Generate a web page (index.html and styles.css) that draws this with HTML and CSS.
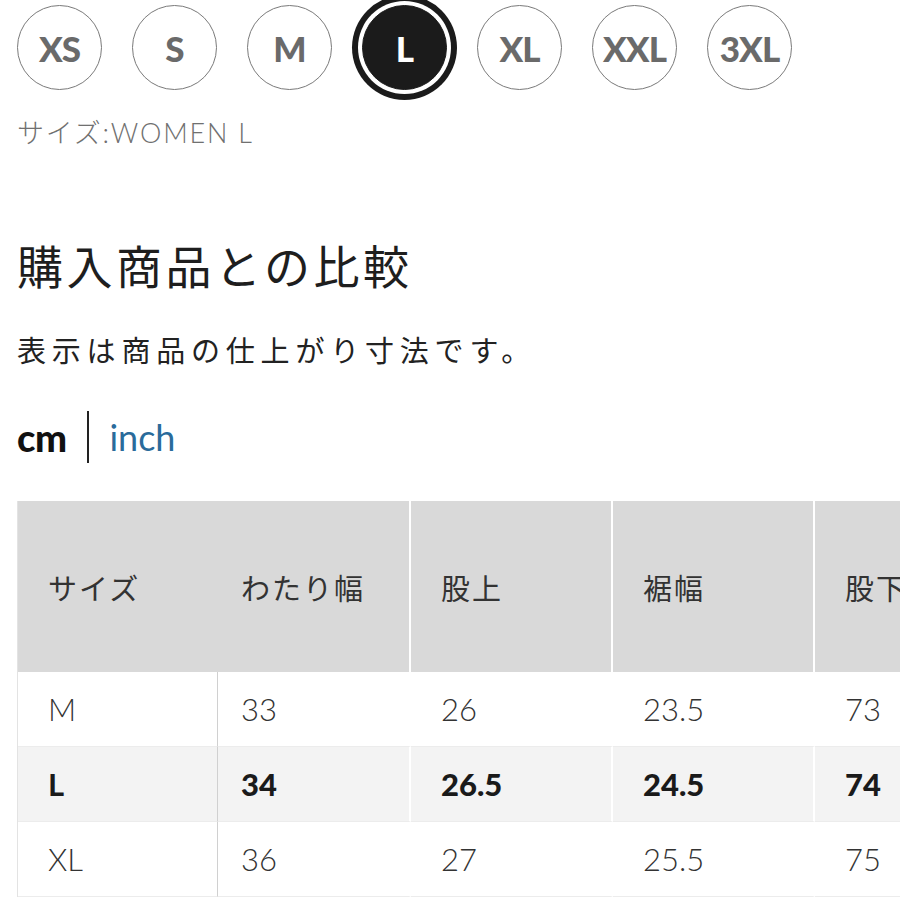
FILE: index.html
```html
<!DOCTYPE html>
<html lang="ja">
<head>
<meta charset="utf-8">
<link rel="stylesheet" href="styles.css">
</head>
<body>
<div class="page">
  <div class="sizes">
    <span class="chip">XS</span>
    <span class="chip">S</span>
    <span class="chip">M</span>
    <span class="chip chip-on">L</span>
    <span class="chip">XL</span>
    <span class="chip">XXL</span>
    <span class="chip">3XL</span>
  </div>
  <div class="size-label">サイズ:WOMEN L</div>
  <h2 class="title">購入商品との比較</h2>
  <p class="note">表示は商品の仕上がり寸法です。</p>
  <div class="units">
    <span class="unit-cm">cm</span>
    <span class="unit-sep"></span>
    <span class="unit-inch">inch</span>
  </div>
  <table class="chart">
    <colgroup>
      <col class="c1"><col class="c2"><col class="c3"><col class="c4"><col class="c5">
    </colgroup>
    <thead>
      <tr>
        <th class="first">サイズ</th>
        <th class="second">わたり幅</th>
        <th>股上</th>
        <th>裾幅</th>
        <th>股下</th>
      </tr>
    </thead>
    <tbody>
      <tr>
        <td class="first">M</td><td class="second">33</td><td>26</td><td>23.5</td><td>73</td>
      </tr>
      <tr class="current">
        <td class="first">L</td><td class="second">34</td><td>26.5</td><td>24.5</td><td>74</td>
      </tr>
      <tr>
        <td class="first">XL</td><td class="second">36</td><td>27</td><td>25.5</td><td>75</td>
      </tr>
    </tbody>
  </table>
</div>
</body>
</html>
```
FILE: styles.css
```css
html, body {
  margin: 0;
  padding: 0;
  background: #fff;
}
body {
  width: 900px;
  height: 900px;
  overflow: hidden;
  font-family: "Lato", "Noto Sans CJK JP", sans-serif;
  color: #222;
}
.page {
  padding: 5px 0 0 17px;
}
.sizes {
  display: flex;
  gap: 30px;
}
.chip {
  box-sizing: border-box;
  width: 85px;
  height: 85px;
  flex: none;
  border-radius: 50%;
  border: 1.5px solid #7a7a7a;
  display: flex;
  align-items: center;
  justify-content: center;
  font-family: "Lato", sans-serif;
  font-weight: 900;
  font-size: 35px;
  letter-spacing: -1px;
  color: #6a6a6a;
}
.chip-on {
  background: #1b1b1b;
  border-color: #1b1b1b;
  color: #fff;
  box-shadow: 0 0 0 4px #fff, 0 0 0 10px #1b1b1b;
}
.size-label {
  margin-top: 27px;
  font-family: "Lato", "Noto Sans CJK JP", sans-serif;
  font-weight: 300;
  font-size: 27px;
  line-height: 32px;
  letter-spacing: 1.8px;
  color: #707070;
}
.title {
  margin: 85px 0 0;
  font-family: "Noto Sans CJK JP", sans-serif;
  font-weight: 400;
  font-size: 46px;
  line-height: 60px;
  letter-spacing: 3.5px;
  color: #1e1e1e;
}
.note {
  margin: 35px 0 0;
  font-family: "Noto Sans CJK JP", sans-serif;
  font-weight: 400;
  font-size: 29px;
  line-height: 40px;
  letter-spacing: 5.8px;
  color: #222;
}
.units {
  margin-top: 42px;
  height: 52px;
  display: flex;
  align-items: center;
}
.unit-cm {
  font-family: "Lato", sans-serif;
  font-weight: 900;
  font-size: 38px;
  color: #111;
  letter-spacing: -0.5px;
}
.unit-sep {
  width: 2px;
  height: 52px;
  background: #222;
  margin: 0 20px 0 21px;
}
.unit-inch {
  font-family: "Lato", sans-serif;
  font-weight: 400;
  font-size: 36px;
  color: #2a6b9b;
}
.chart {
  margin-top: 38px;
  border-collapse: separate;
  border-spacing: 0;
  table-layout: fixed;
  width: 1010px;
  border-left: 1px solid #e3e3e3;
  font-family: "Lato", "Noto Sans CJK JP", sans-serif;
}
.c1 { width: 200px; }
.c2 { width: 193px; }
.c3 { width: 202px; }
.c4 { width: 202px; }
.c5 { width: 213px; }
.chart th {
  height: 171px;
  padding: 0 0 0 30px;
  background: #d9d9d9;
  text-align: left;
  font-family: "Noto Sans CJK JP", sans-serif;
  font-weight: 400;
  font-size: 29px;
  letter-spacing: 2px;
  color: #333;
  border-right: 2px solid #fff;
}
.chart th.first {
  border-right: 0;
}
.chart th.second {
  padding-left: 23px;
}
.chart td {
  box-sizing: border-box;
  height: 75px;
  padding: 0 0 0 30px;
  font-weight: 300;
  font-size: 31px;
  color: #333;
  border-right: 2px solid #fff;
  border-bottom: 1px solid #ececec;
}
.chart td.first {
  border-right: 1px solid #d0d0d0;
}
.chart td.second {
  padding-left: 23px;
}
.chart tr.current td {
  background: #f3f3f3;
  font-weight: 900;
  color: #1a1a1a;
}
.chart tr.current td.first {
  font-weight: 700;
}
```
